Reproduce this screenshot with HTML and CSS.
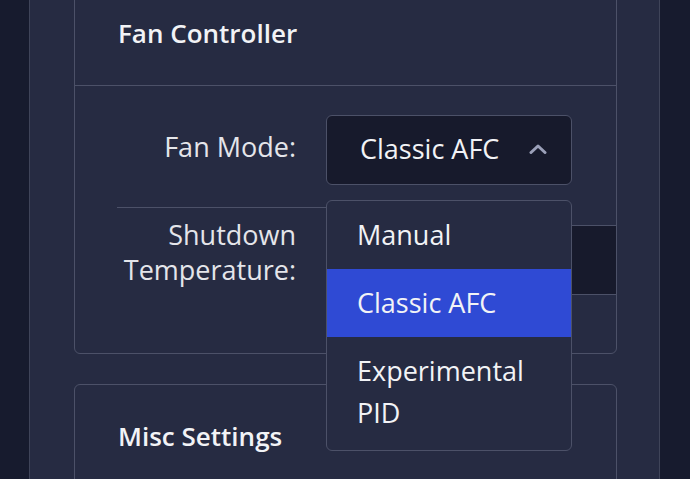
FILE: index.html
```html
<!DOCTYPE html>
<html lang="en">
<head>
  <meta charset="UTF-8" />
  <meta name="viewport" content="width=device-width, initial-scale=1.0"/>
  <title>Settings</title>
  <link rel="stylesheet" href="styles.css">
</head>
<body>
  <div class="panel">
    <section class="card card-fan">
      <div class="card-header">Fan Controller</div>
      <div class="card-body">
        <div class="field-row first">
          <label class="field-label">Fan Mode:</label>
          <div class="select-wrap">
            <div class="select">
              <span>Classic AFC</span>
              <svg class="chevron" width="18" height="10" viewBox="0 0 18 10">
                <path d="M2 8.5 L9 2 L16 8.5" fill="none" stroke="#9ba0b9" stroke-width="3" stroke-linecap="round" stroke-linejoin="round"/>
              </svg>
            </div>
            <ul class="dropdown">
              <li>Manual</li>
              <li class="active">Classic AFC</li>
              <li>Experimental PID</li>
            </ul>
          </div>
        </div>
        <div class="field-row">
          <label class="field-label">Shutdown Temperature:</label>
          <div class="input"></div>
        </div>
      </div>
    </section>

    <section class="card">
      <div class="card-header">Misc Settings</div>
    </section>
  </div>
</body>
</html>
```

FILE: styles.css
```css
:root {
  --outer: #171b2e;
  --panel: #262b42;
  --border: #4c5168;
  --field: #171a2c;
  --accent: #2f4ad4;
  --text: #f2f3f6;
  --label: #e4e5ea;
}
* {
  box-sizing: border-box;
  margin: 0;
  padding: 0;
}
html, body {
  height: 100%;
  overflow: hidden;
}
body {
  background: var(--outer);
  color: var(--text);
  font-family: 'Open Sans', 'Noto Sans', sans-serif;
  font-size: 27px;
}
.panel {
  display: flow-root;
  margin: 0 30px 0 29px;
  height: 100%;
  background: var(--panel);
  border-left: 1px solid #3f4459;
  border-right: 1px solid #3f4459;
  padding: 0 42px 0 44px;
}
.card {
  border: 1px solid var(--border);
  border-radius: 6px;
  margin-bottom: 30px;
}
.card-fan {
  margin-top: -20px;
}
.card-header {
  height: 105px;
  padding-left: 43px;
  display: flex;
  align-items: center;
  font-weight: 600;
  font-size: 26px;
  color: var(--text);
}
.card-fan .card-header {
  border-bottom: 1px solid var(--border);
}
.card:last-child .card-header {
  padding-bottom: 4px;
}
.card-body {
  padding: 29px 0 58px 42px;
}
.field-row {
  display: flex;
  align-items: center;
  gap: 30px;
  padding-top: 17px;
}
.field-row.first {
  padding-top: 0;
  padding-bottom: 22px;
  margin-right: 44px;
  border-bottom: 1px solid var(--border);
}
.field-label {
  width: 179px;
  flex: 0 0 179px;
  text-align: right;
  color: var(--label);
  line-height: 35px;
  margin-top: -16px;
}
.field-row.first .field-label {
  margin-top: -7px;
}
.select-wrap {
  position: relative;
  width: 246px;
}
.select {
  height: 70px;
  background: var(--field);
  border: 1px solid var(--border);
  border-radius: 6px;
  display: flex;
  align-items: center;
  justify-content: space-between;
  padding: 0 24px 3px 33px;
}
.chevron {
  display: block;
  margin-top: 1px;
}
.input {
  flex: 1;
  height: 70px;
  background: var(--field);
  border: 1px solid var(--border);
  border-radius: 6px 0 0 6px;
  border-right: none;
}
.dropdown {
  position: absolute;
  top: 85px;
  left: 0;
  width: 246px;
  list-style: none;
  background: var(--panel);
  border: 1px solid var(--border);
  border-radius: 6px;
  overflow: hidden;
  z-index: 2;
  padding-bottom: 2px;
}
.dropdown li {
  padding: 13px 30px 14px 30px;
  line-height: 41px;
  font-weight: 500;
  color: var(--text);
}
.dropdown li:last-child {
  line-height: 42px;
}
.dropdown li.active {
  background: var(--accent);
}
```
